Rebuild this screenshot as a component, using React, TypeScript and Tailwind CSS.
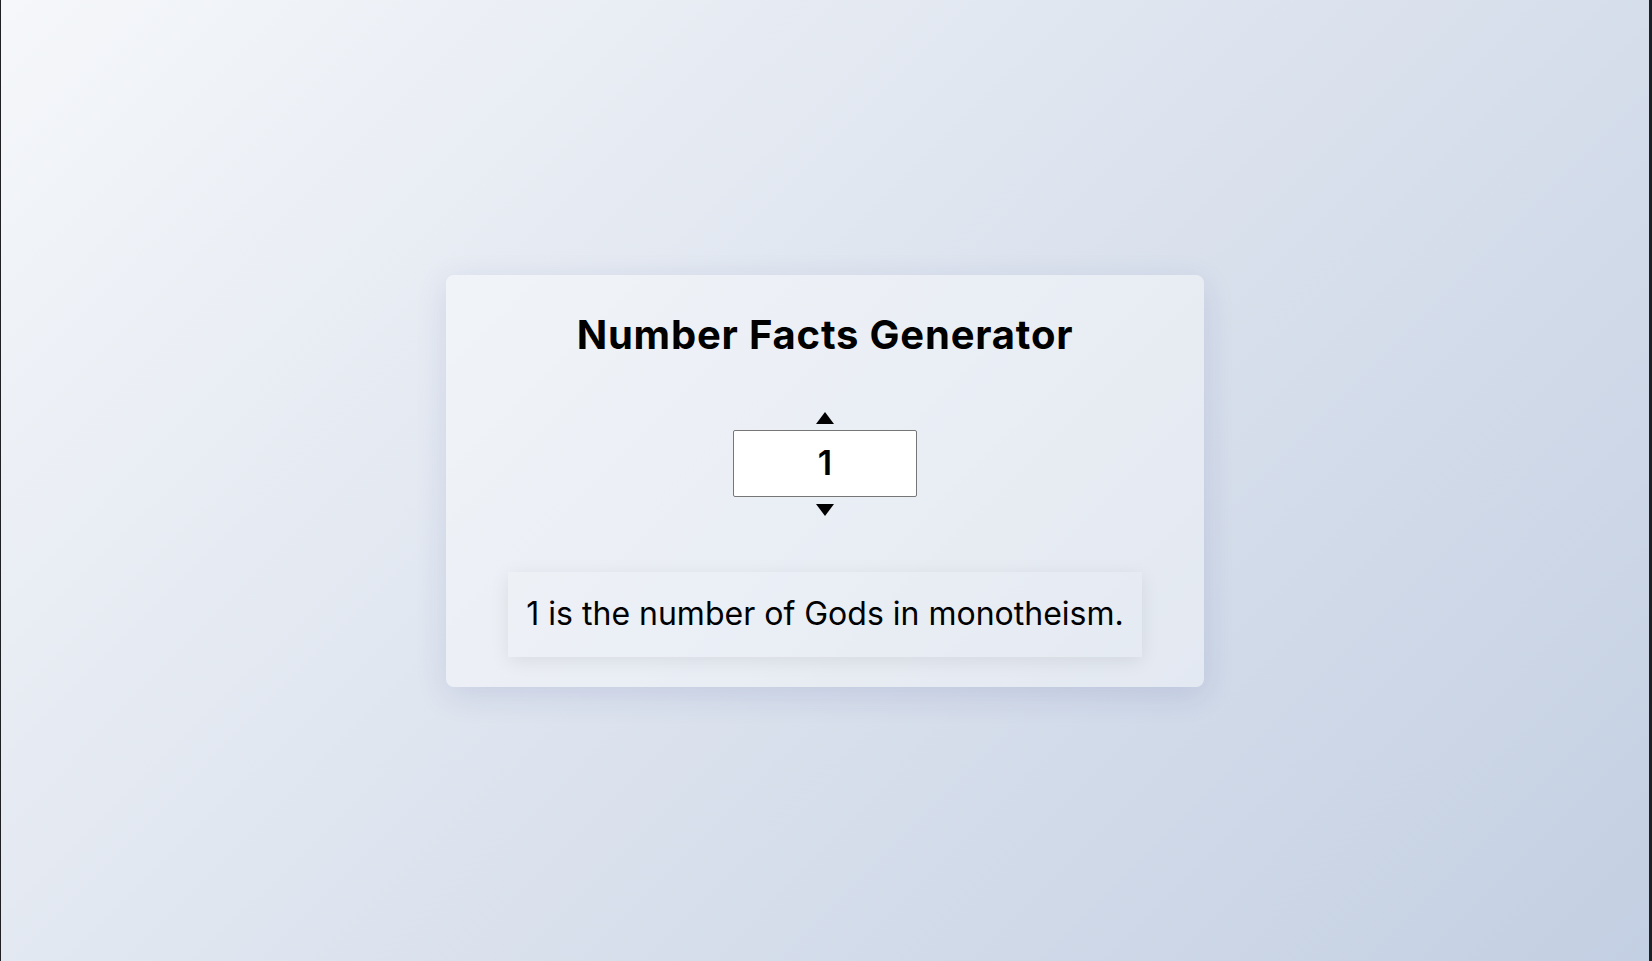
export default function App() {
  return (
    <div className="flex h-[961px] w-full" style={{ fontFamily: '"Inter", "Noto Sans", sans-serif' }}>
      <div className="w-px bg-[#1e2024]" />
      <main className="flex flex-1 items-center justify-center bg-[linear-gradient(135deg,#f5f7fa_0%,#c3cfe2_100%)]">
        {/* card */}
        <div className="flex w-[758px] flex-col items-center rounded-lg bg-white/40 pt-[30px] pb-[30px] shadow-[0_8px_32px_rgba(31,38,135,0.12)]">
          <h1 className="h-[60px] text-[40px] leading-[60px] font-bold tracking-[0.02em] text-black">
            Number Facts Generator
          </h1>
          {/* number input with custom spinner */}
          <div className="mt-[47px] flex flex-col items-center">
            <button className="flex h-3 w-[18px] items-center justify-center">
              <svg width="18" height="12" viewBox="0 0 18 12">
                <polygon points="9,0 18,12 0,12" fill="#000" />
              </svg>
            </button>
            <div className="mt-[6px] flex h-[67px] w-[184px] items-center justify-center rounded-[2px] border border-[#767676] bg-white">
              <span className="text-[34px] leading-none font-semibold text-black">1</span>
            </div>
            <button className="mt-[7px] flex h-3 w-[18px] items-center justify-center">
              <svg width="18" height="12" viewBox="0 0 18 12">
                <polygon points="0,0 18,0 9,12" fill="#000" />
              </svg>
            </button>
          </div>
          {/* fact */}
          <div className="mt-[56px] flex h-[85px] w-[634px] items-center justify-center bg-white/5 shadow-[0_4px_18px_rgba(0,0,0,0.08)]">
            <p className="text-[32px] text-black">1 is the number of Gods in monotheism.</p>
          </div>
        </div>
      </main>
      <div className="w-[3px] bg-[#1e2024]" />
    </div>
  );
}
